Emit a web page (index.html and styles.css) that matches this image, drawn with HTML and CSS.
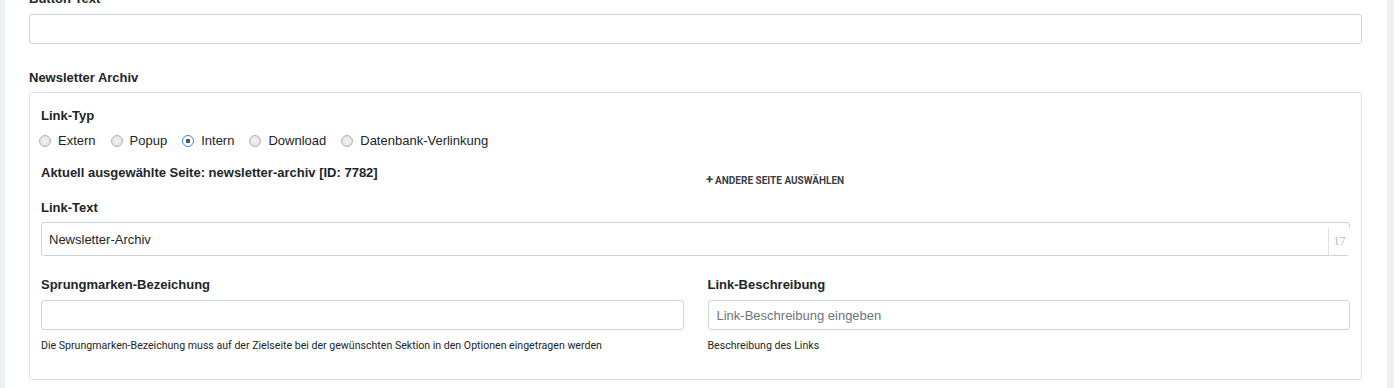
FILE: index.html
```html
<!DOCTYPE html>
<html lang="de">

<head>
    <meta charset="UTF-8">
    <title>Newsletter Archiv</title>
    <link rel="stylesheet" href="styles.css">
</head>

<body>

    <div class="panel">
        <div class="field">
            <label class="field-label" for="buttontext">Button Text</label>
            <input type="text" id="buttontext" class="control" />
        </div>

        <div class="field">
            <div class="field-label section-label">Newsletter Archiv</div>
            <div class="link-box">
                <div class="field-label">Link-Typ</div>
                <div class="radio-row">
                    <label class="radio"><input type="radio" name="linktyp" />Extern</label>
                    <label class="radio"><input type="radio" name="linktyp" />Popup</label>
                    <label class="radio"><input type="radio" name="linktyp" checked />Intern</label>
                    <label class="radio"><input type="radio" name="linktyp" />Download</label>
                    <label class="radio"><input type="radio" name="linktyp" />Datenbank-Verlinkung</label>
                </div>

                <div class="current-row">
                    <div class="current-page">Aktuell ausgewählte Seite: newsletter-archiv [ID: 7782]</div>
                    <a class="pick-btn" href="#"><span class="plus">+</span>Andere Seite auswählen</a>
                </div>

                <div class="field-label text-label">Link-Text</div>
                <div class="counter-wrap">
                    <input type="text" class="control control-lg" value="Newsletter-Archiv" />
                    <span class="counter">17</span>
                </div>

                <div class="two-cols">
                    <div class="col">
                        <label class="field-label" for="anchor">Sprungmarken-Bezeichung</label>
                        <input type="text" id="anchor" class="control" />
                        <small class="help">Die Sprungmarken-Bezeichung muss auf der Zielseite bei der gewünschten Sektion in den Optionen eingetragen werden</small>
                    </div>
                    <div class="col">
                        <label class="field-label" for="linkdesc">Link-Beschreibung</label>
                        <input type="text" id="linkdesc" class="control" placeholder="Link-Beschreibung eingeben" />
                        <small class="help">Beschreibung des Links</small>
                    </div>
                </div>
            </div>
        </div>
    </div>

</body>

</html>
```

FILE: styles.css
```css
body {
    margin: 0;
    background: #f0f1f4;
    font: 13px/19px "Liberation Sans", Arial, Helvetica, sans-serif;
    color: #212529;
}

.panel {
    margin: -31px 7px 0 5px;
    padding: 20px 25px 0 24px;
    background: #fff;
    min-height: 419px;
    box-sizing: border-box;
}

.field {
    margin-bottom: 24px;
}

.field-label {
    display: block;
    font-weight: bold;
    margin-bottom: 6px;
    color: #212529;
}

.section-label {
    margin-bottom: 5px;
}

.control {
    display: block;
    width: 100%;
    box-sizing: border-box;
    height: 30px;
    padding: 4px 8px;
    border: 1px solid #ced4da;
    border-radius: 3px;
    font: 13px "Liberation Sans", Arial, sans-serif;
    color: #212529;
    background: #fff;
}

.control::placeholder {
    color: #6c757d;
}

.control-lg {
    height: 34px;
    padding: 6px 7px;
}

.link-box {
    border: 1px solid #dee2e6;
    border-radius: 3px;
    padding: 13px 11px 26px 11px;
}

.text-label {
    margin-bottom: 5px;
}

.radio-row {
    display: flex;
    gap: 15px;
    margin-left: -2px;
}

.radio {
    display: flex;
    align-items: center;
    color: #212529;
}

.radio input {
    appearance: none;
    -webkit-appearance: none;
    width: 12px;
    height: 12px;
    margin: 0 7px 0 0;
    border: 1px solid #b4b4b4;
    border-radius: 50%;
    background: radial-gradient(circle, #f4f4f4 0, #dcdcdc 100%);
    box-sizing: border-box;
}

.radio input:checked {
    border: 1px solid #3b86e8;
    background: radial-gradient(circle, #555 0, #555 2px, #fff 2.6px);
}

.current-row {
    display: flex;
    margin-top: 13px;
    margin-bottom: 8px;
}

.current-page {
    width: 665px;
    font-weight: bold;
}

.pick-btn {
    margin-top: 7px;
    font: bold 10px/19px Roboto, "Liberation Sans", sans-serif;
    text-transform: uppercase;
    color: #3a3f45;
    text-decoration: none;
}

.plus {
    font-size: 13px;
    margin-right: 2px;
}

.counter-wrap {
    position: relative;
}

.counter {
    position: absolute;
    right: 0;
    top: 6px;
    bottom: 1px;
    width: 21px;
    background: #fff;
    border-left: 1px solid #dee2e6;
    font: 12px/27px "Liberation Serif", serif;
    color: #b9bcc0;
    text-align: center;
}

.two-cols {
    display: grid;
    grid-template-columns: 1fr 1fr;
    gap: 24px;
    margin-top: 19px;
}

.help {
    display: block;
    margin-top: 9px;
    font: 10.6px/14px Roboto, "Liberation Sans", sans-serif;
    color: #212529;
}
```
